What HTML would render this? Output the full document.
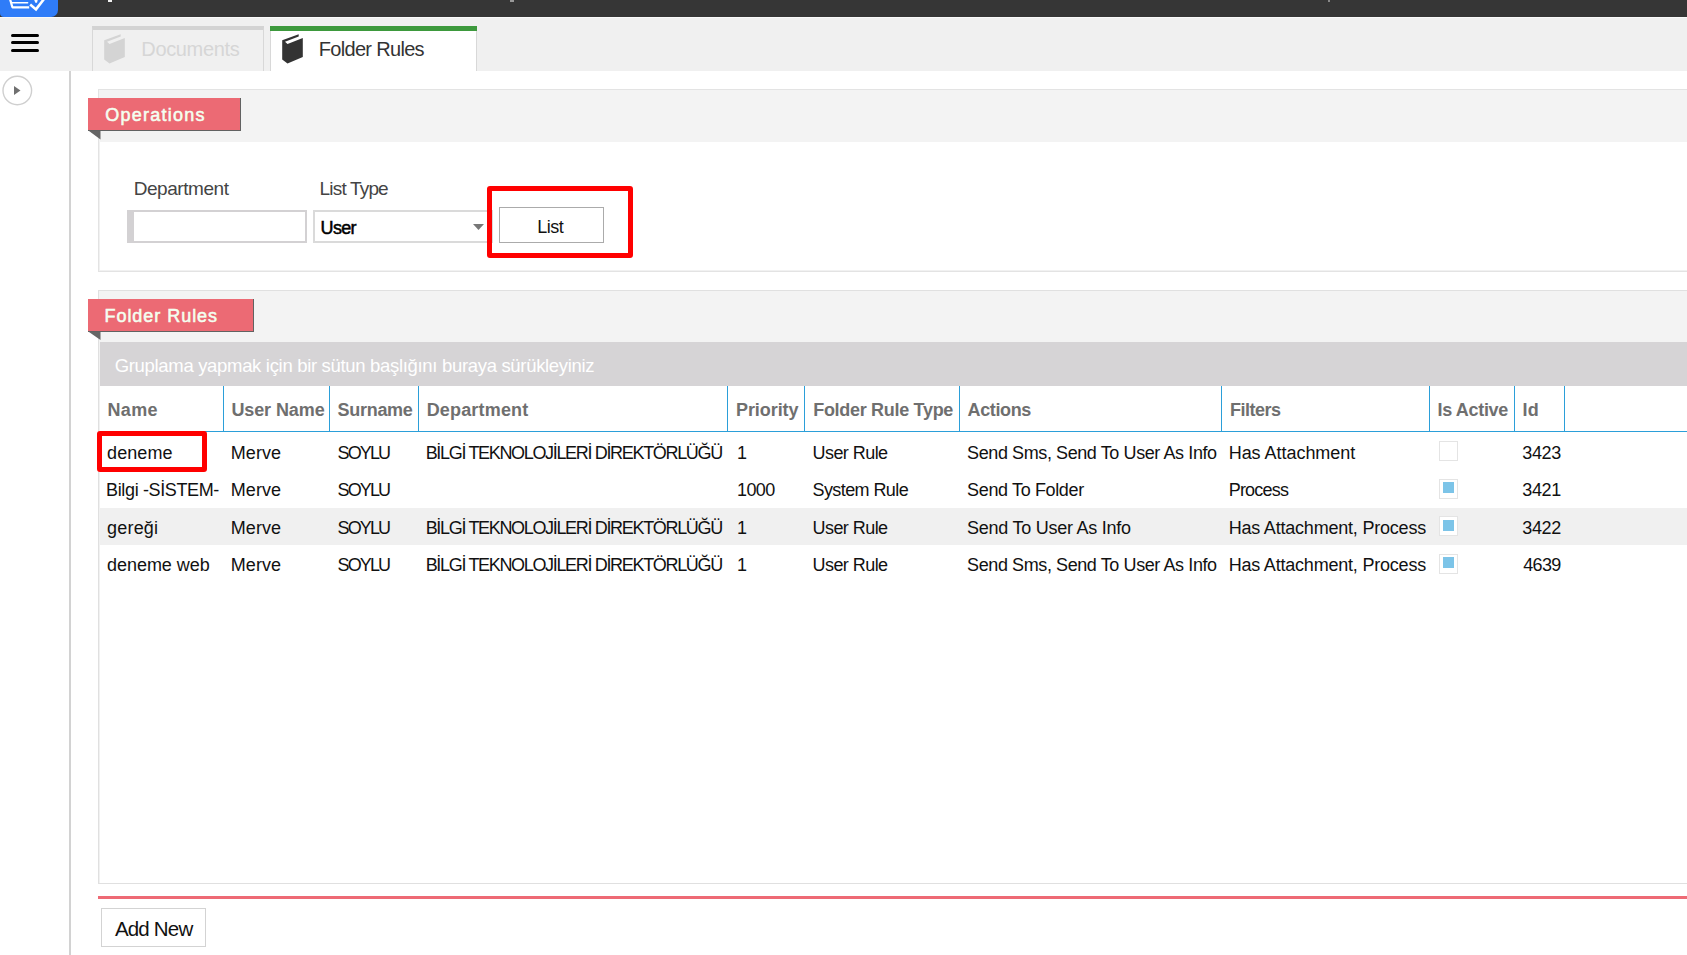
<!DOCTYPE html>
<html><head><meta charset="utf-8">
<style>
*{box-sizing:border-box;margin:0;padding:0}
html,body{width:1687px;height:955px;overflow:hidden;background:#fff;font-family:"Liberation Sans",sans-serif}
.a{position:absolute}
.t{position:absolute;white-space:pre;line-height:1}
.sep{position:absolute;top:386px;width:1px;height:45px;background:#2b9fd9}
.cb{position:absolute;left:1439px;width:19px;height:20px;border:1.5px solid #e4e4e4;background:#fff}
.cb i{position:absolute;left:2.5px;top:2.5px;width:11px;height:11px;background:#7cc4e8}
</style></head><body>
<!-- top bar -->
<div class="a" style="left:0;top:0;width:1687px;height:17px;background:#363636"></div>
<div class="a" style="left:0;top:0;width:58px;height:17px;background:#2f7cf8;border-radius:0 0 7px 4px"></div>
<svg class="a" style="left:0;top:0" width="58" height="17" viewBox="0 0 58 17">
 <path d="M10 -1 L12.4 7.3 L29.2 7.3" stroke="#fff" stroke-width="2.2" fill="none" stroke-linejoin="round"/>
 <path d="M11.5 2.85 L27.6 2.85" stroke="#fff" stroke-width="1.5" fill="none" stroke-linecap="round"/>
 <path d="M30.2 4.6 L36 9.4 L44 -1" stroke="#fff" stroke-width="2.6" fill="none"/>
 <path d="M34.2 0 L37.7 0 L37 2.8 L35.3 2.8 Z" fill="#fff"/>
</svg>
<div class="a" style="left:0;top:17px;width:1687px;height:1px;background:#fafafa"></div>
<div class="a" style="left:108px;top:0;width:4px;height:1.5px;background:#f0f0f0"></div>
<div class="a" style="left:510px;top:0;width:4px;height:1.5px;background:#999"></div>
<div class="a" style="left:1328px;top:0;width:2px;height:1.5px;background:#888"></div>
<!-- header gray -->
<div class="a" style="left:0;top:18px;width:1687px;height:53px;background:#f0f0f0"></div>
<div class="a" style="left:11px;top:33.6px;width:27.5px;height:3px;background:#000;border-radius:1.5px"></div>
<div class="a" style="left:11px;top:41.1px;width:27.5px;height:3px;background:#000;border-radius:1.5px"></div>
<div class="a" style="left:11px;top:48.6px;width:27.5px;height:3px;background:#000;border-radius:1.5px"></div>
<!-- tabs -->
<div class="a" style="left:92px;top:26px;width:172px;height:45px;border-top:4px solid #d3d3d3;border-left:1px solid #d8d8d8;border-right:1px solid #d8d8d8;background:#f0f0f0"></div>
<div class="a" style="left:104px;top:34px"><svg width="22" height="31" viewBox="0 0 22 31"><path d="M0.2 6.2 L16.7 0.3 L16.7 2.45 L3 7.8 L5.5 9.9 L20.8 4.05 L20.8 22.9 L5.5 29.5 L0.2 25.6 Z" fill="#d4d4d4"/></svg></div>
<div class="a" style="left:270px;top:26px;width:207px;height:45px;border-left:1px solid #d8d8d8;border-right:1px solid #d8d8d8;background:#fff"></div>
<div class="a" style="left:270px;top:26px;width:207px;height:5px;background:#3d993d"></div>
<div class="a" style="left:282px;top:34px"><svg width="22" height="31" viewBox="0 0 22 31"><path d="M0.2 6.2 L16.7 0.3 L16.7 2.45 L3 7.8 L5.5 9.9 L20.8 4.05 L20.8 22.9 L5.5 29.5 L0.2 25.6 Z" fill="#333333"/></svg></div>
<!-- sidebar -->
<div class="a" style="left:69px;top:71px;width:2px;height:884px;background:#d2d2d2"></div>
<svg class="a" style="left:0;top:73px" width="40" height="36" viewBox="0 0 40 36">
 <circle cx="17.3" cy="17.5" r="14.3" fill="#fff" stroke="#cfcfcf" stroke-width="1.4"/>
 <path d="M14 13 L20.5 17.5 L14 22 Z" fill="#707070"/>
</svg>
<!-- operations panel -->
<div class="a" style="left:98px;top:89px;width:1600px;height:183px;border:1px solid #e3e3e3;background:#fff;box-shadow:inset 1px -1px 0 #f1f1f1"></div>
<div class="a" style="left:99px;top:90px;width:1600px;height:51.5px;background:#f3f3f3"></div>
<div class="a" style="left:88px;top:98px;width:153px;height:33px;background:#ec6a74;border-right:1px solid #626262;border-bottom:1px solid #626262"></div>
<svg class="a" style="left:88px;top:131px" width="13" height="10" viewBox="0 0 13 10"><path d="M1 0 L12.5 0 L12.5 8.5 Z" fill="#666"/></svg>
<!-- form -->
<div class="a" style="left:127px;top:210px;width:180px;height:33px;border:2px solid #d3d1d3;border-left-width:7px;background:#fff"></div>
<div class="a" style="left:313px;top:210px;width:180px;height:33px;border:2px solid #dadada;background:#fff"></div>
<svg class="a" style="left:472px;top:223px" width="13" height="8" viewBox="0 0 13 8"><path d="M1 1 L12 1 L6.5 7 Z" fill="#777"/></svg>
<div class="a" style="left:499px;top:207px;width:105px;height:36px;border:1px solid #ababab;background:#fff"></div>
<div class="a" style="left:487px;top:186px;width:146px;height:72px;border:5px solid #ff0000;border-radius:3px"></div>
<!-- folder rules panel -->
<div class="a" style="left:98px;top:290px;width:1600px;height:594px;border:1px solid #e0e0e0;background:#fff;box-shadow:inset 1px 0 0 #f1f1f1"></div>
<div class="a" style="left:99px;top:291px;width:1600px;height:51px;background:#f3f3f3"></div>
<div class="a" style="left:88px;top:299px;width:166px;height:33px;background:#ec6a74;border-right:1px solid #626262;border-bottom:1px solid #626262"></div>
<svg class="a" style="left:88px;top:332px" width="13" height="10" viewBox="0 0 13 10"><path d="M1 0 L12.5 0 L12.5 8 Z" fill="#666"/></svg>
<div class="a" style="left:100px;top:342px;width:1600px;height:44px;background:#d6d4d6"></div>
<div class="a" style="left:100px;top:430.5px;width:1600px;height:1.5px;background:#2b9fd9"></div>
<div class="sep" style="left:223px"></div>
<div class="sep" style="left:329px"></div>
<div class="sep" style="left:418px"></div>
<div class="sep" style="left:727px"></div>
<div class="sep" style="left:804px"></div>
<div class="sep" style="left:959px"></div>
<div class="sep" style="left:1221px"></div>
<div class="sep" style="left:1429px"></div>
<div class="sep" style="left:1514px"></div>
<div class="sep" style="left:1564px"></div>
<div class="a" style="left:100px;top:507.5px;width:1600px;height:37.5px;background:#f0f0f0"></div>
<div class="cb" style="top:441.2px"></div>
<div class="cb" style="top:478.6px"><i></i></div>
<div class="cb" style="top:516.1px"><i></i></div>
<div class="cb" style="top:553.5px"><i></i></div>

<div class="a" style="left:97px;top:431px;width:110px;height:40.6px;border:5px solid #ff0000;border-radius:3px"></div>
<!-- bottom -->
<div class="a" style="left:98px;top:896px;width:1600px;height:3px;background:#ee6a75"></div>
<div class="a" style="left:101px;top:908px;width:105px;height:39px;border:1.5px solid #d3d3d3;background:#fff"></div>
<div class="t" style="left:141.30px;top:39.35px;font-size:20px;color:#d6d6d6;letter-spacing:-0.350px;">Documents</div>
<div class="t" style="left:318.80px;top:39.05px;font-size:20px;color:#333;letter-spacing:-0.691px;">Folder Rules</div>
<div class="t" style="left:105.30px;top:106.15px;font-size:18px;color:#f4fff0;letter-spacing:1.233px;-webkit-text-stroke:0.55px #f4fff0;">Operations</div>
<div class="t" style="left:104.50px;top:307.15px;font-size:18px;color:#f4fff0;letter-spacing:0.955px;-webkit-text-stroke:0.55px #f4fff0;">Folder Rules</div>
<div class="t" style="left:133.70px;top:179.40px;font-size:19px;color:#444;letter-spacing:-0.444px;">Department</div>
<div class="t" style="left:319.60px;top:179.40px;font-size:19px;color:#444;letter-spacing:-0.825px;">List Type</div>
<div class="t" style="left:320.60px;top:219.15px;font-size:18px;color:#000;letter-spacing:-0.667px;-webkit-text-stroke:0.5px #000;">User</div>
<div class="t" style="left:537.30px;top:218.15px;font-size:18px;color:#111;letter-spacing:-0.533px;">List</div>
<div class="t" style="left:114.70px;top:356.52px;font-size:18.5px;color:#ffffff;letter-spacing:-0.319px;">Gruplama yapmak için bir sütun başlığını buraya sürükleyiniz</div>
<div class="t" style="left:107.50px;top:400.85px;font-size:18px;color:#6f6f6f;font-weight:700;letter-spacing:0.367px;">Name</div>
<div class="t" style="left:231.40px;top:400.85px;font-size:18px;color:#6f6f6f;font-weight:700;letter-spacing:-0.100px;">User Name</div>
<div class="t" style="left:337.60px;top:400.85px;font-size:18px;color:#6f6f6f;font-weight:700;letter-spacing:-0.300px;">Surname</div>
<div class="t" style="left:426.70px;top:400.85px;font-size:18px;color:#6f6f6f;font-weight:700;letter-spacing:0.167px;">Department</div>
<div class="t" style="left:736.00px;top:400.85px;font-size:18px;color:#6f6f6f;font-weight:700;letter-spacing:-0.071px;">Priority</div>
<div class="t" style="left:813.20px;top:400.85px;font-size:18px;color:#6f6f6f;font-weight:700;letter-spacing:-0.300px;">Folder Rule Type</div>
<div class="t" style="left:967.50px;top:400.85px;font-size:18px;color:#6f6f6f;font-weight:700;letter-spacing:-0.367px;">Actions</div>
<div class="t" style="left:1229.90px;top:400.85px;font-size:18px;color:#6f6f6f;font-weight:700;letter-spacing:-0.467px;">Filters</div>
<div class="t" style="left:1437.50px;top:400.85px;font-size:18px;color:#6f6f6f;font-weight:700;letter-spacing:-0.325px;">Is Active</div>
<div class="t" style="left:1522.50px;top:400.85px;font-size:18px;color:#6f6f6f;font-weight:700;letter-spacing:0.200px;">Id</div>
<div class="t" style="left:107.10px;top:443.95px;font-size:18px;color:#111;letter-spacing:0.060px;">deneme</div>
<div class="t" style="left:230.80px;top:443.95px;font-size:18px;color:#111;letter-spacing:0.050px;">Merve</div>
<div class="t" style="left:337.60px;top:443.95px;font-size:18px;color:#111;letter-spacing:-1.900px;">SOYLU</div>
<div class="t" style="left:425.70px;top:443.95px;font-size:18px;color:#111;letter-spacing:-1.332px;">BİLGİ TEKNOLOJİLERİ DİREKTÖRLÜĞÜ</div>
<div class="t" style="left:737.00px;top:443.95px;font-size:18px;color:#111;">1</div>
<div class="t" style="left:812.50px;top:443.95px;font-size:18px;color:#111;letter-spacing:-0.550px;">User Rule</div>
<div class="t" style="left:967.10px;top:443.95px;font-size:18px;color:#111;letter-spacing:-0.407px;">Send Sms, Send To User As Info</div>
<div class="t" style="left:1228.70px;top:443.95px;font-size:18px;color:#111;letter-spacing:-0.038px;">Has Attachment</div>
<div class="t" style="left:1522.20px;top:443.95px;font-size:18px;color:#111;letter-spacing:-0.300px;">3423</div>
<div class="t" style="left:106.10px;top:481.40px;font-size:18px;color:#111;letter-spacing:-0.369px;">Bilgi -SİSTEM-</div>
<div class="t" style="left:230.80px;top:481.40px;font-size:18px;color:#111;letter-spacing:0.050px;">Merve</div>
<div class="t" style="left:337.60px;top:481.40px;font-size:18px;color:#111;letter-spacing:-1.900px;">SOYLU</div>
<div class="t" style="left:737.00px;top:481.40px;font-size:18px;color:#111;letter-spacing:-0.600px;">1000</div>
<div class="t" style="left:812.50px;top:481.40px;font-size:18px;color:#111;letter-spacing:-0.580px;">System Rule</div>
<div class="t" style="left:967.10px;top:481.40px;font-size:18px;color:#111;letter-spacing:-0.362px;">Send To Folder</div>
<div class="t" style="left:1228.70px;top:481.40px;font-size:18px;color:#111;letter-spacing:-0.800px;">Process</div>
<div class="t" style="left:1522.20px;top:481.40px;font-size:18px;color:#111;letter-spacing:-0.300px;">3421</div>
<div class="t" style="left:107.10px;top:518.85px;font-size:18px;color:#111;letter-spacing:0.180px;">gereği</div>
<div class="t" style="left:230.80px;top:518.85px;font-size:18px;color:#111;letter-spacing:0.050px;">Merve</div>
<div class="t" style="left:337.60px;top:518.85px;font-size:18px;color:#111;letter-spacing:-1.900px;">SOYLU</div>
<div class="t" style="left:425.70px;top:518.85px;font-size:18px;color:#111;letter-spacing:-1.332px;">BİLGİ TEKNOLOJİLERİ DİREKTÖRLÜĞÜ</div>
<div class="t" style="left:737.00px;top:518.85px;font-size:18px;color:#111;">1</div>
<div class="t" style="left:812.50px;top:518.85px;font-size:18px;color:#111;letter-spacing:-0.550px;">User Rule</div>
<div class="t" style="left:967.10px;top:518.85px;font-size:18px;color:#111;letter-spacing:-0.253px;">Send To User As Info</div>
<div class="t" style="left:1228.70px;top:518.85px;font-size:18px;color:#111;letter-spacing:-0.209px;">Has Attachment, Process</div>
<div class="t" style="left:1522.20px;top:518.85px;font-size:18px;color:#111;letter-spacing:-0.300px;">3422</div>
<div class="t" style="left:107.10px;top:556.30px;font-size:18px;color:#111;letter-spacing:-0.056px;">deneme web</div>
<div class="t" style="left:230.80px;top:556.30px;font-size:18px;color:#111;letter-spacing:0.050px;">Merve</div>
<div class="t" style="left:337.60px;top:556.30px;font-size:18px;color:#111;letter-spacing:-1.900px;">SOYLU</div>
<div class="t" style="left:425.70px;top:556.30px;font-size:18px;color:#111;letter-spacing:-1.332px;">BİLGİ TEKNOLOJİLERİ DİREKTÖRLÜĞÜ</div>
<div class="t" style="left:737.00px;top:556.30px;font-size:18px;color:#111;">1</div>
<div class="t" style="left:812.50px;top:556.30px;font-size:18px;color:#111;letter-spacing:-0.550px;">User Rule</div>
<div class="t" style="left:967.10px;top:556.30px;font-size:18px;color:#111;letter-spacing:-0.407px;">Send Sms, Send To User As Info</div>
<div class="t" style="left:1228.70px;top:556.30px;font-size:18px;color:#111;letter-spacing:-0.209px;">Has Attachment, Process</div>
<div class="t" style="left:1523.20px;top:556.30px;font-size:18px;color:#111;letter-spacing:-0.633px;">4639</div>
<div class="t" style="left:114.90px;top:919.03px;font-size:20.5px;color:#111;letter-spacing:-0.800px;">Add New</div>
</body></html>
